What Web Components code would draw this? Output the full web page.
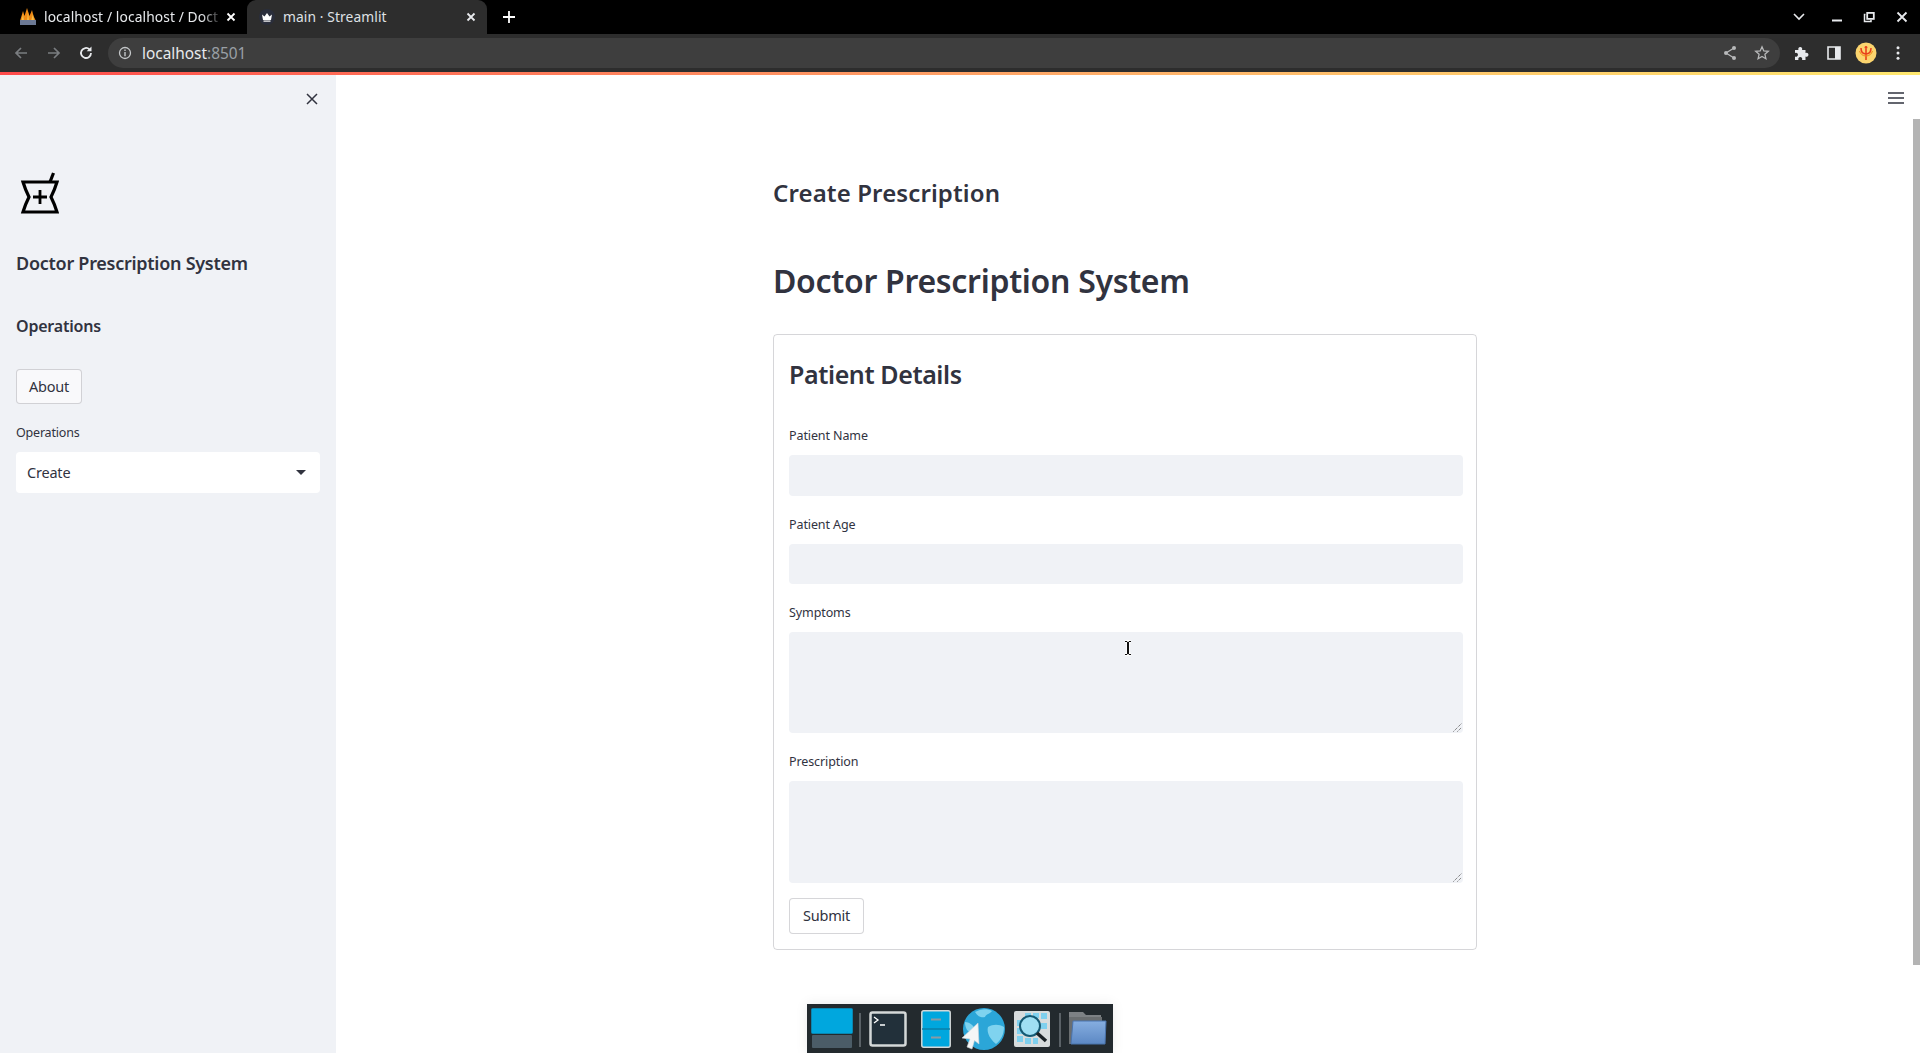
<!DOCTYPE html>
<html lang="en"><head><meta charset="utf-8"><title>main · Streamlit</title>
<style>
html,body{margin:0;height:100%;overflow:hidden;background:#fff}
body{font-family:"Noto Sans","Liberation Sans",sans-serif}
app-frame{height:1053px}
</style></head><body>
<app-frame>
  <browser-chrome></browser-chrome>
  <st-sidebar slot="side">
    <st-button slot="about" label="About" tone="soft"></st-button>
  </st-sidebar>
  <st-main slot="main">
    <st-card>
      <st-field label="Patient Name" h="41"></st-field>
      <st-field label="Patient Age" h="40"></st-field>
      <st-field label="Symptoms" h="101" area></st-field>
      <st-field label="Prescription" h="102" area></st-field>
      <st-button label="Submit" class="sub"></st-button>
    </st-card>
  </st-main>
  <os-dock slot="over"></os-dock>
</app-frame>
<script>
function def(name,html,init){customElements.define(name,class extends HTMLElement{constructor(){super();this.attachShadow({mode:'open'}).innerHTML=typeof html==='function'?html(this):html}connectedCallback(){if(init)init(this)}})}
const TXT='#31333f';
const ST='font-family:"Noto Sans",sans-serif;';

def('app-frame',`<style>
:host{display:flex;flex-direction:column;position:relative;overflow:hidden}
.body{flex:1;display:flex;min-height:0}
::slotted(os-dock){position:absolute;left:807px;bottom:0}
.ibeam{position:absolute;left:1123px;top:640px}
</style>
<slot></slot>
<div class="body"><slot name="side"></slot><slot name="main"></slot></div>
<slot name="over"></slot>
<svg class="ibeam" width="10" height="16" viewBox="0 0 10 16"><path d="M2 1.5h6M2 14.5h6M5 1.5v13" stroke="#fff" stroke-width="3.4" fill="none"/><path d="M2 1.5h2.2M5.8 1.5H8M2 14.5h2.2M5.8 14.5H8M4.5 2v12M5.5 2v12" stroke="#111" stroke-width="1" fill="none"/></svg>`);

def('browser-chrome',`<style>
:host{display:block;flex:none;color:#e8eaed;font:13px "Noto Sans",sans-serif}
.tabs{height:34px;background:#000;display:flex;position:relative}
.tab{box-sizing:border-box;height:34px;display:flex;align-items:center;white-space:nowrap}
.tab.off{width:247px;padding:0 8px 0 18px}
.tab.on{width:240px;background:#2d2d2d;border-radius:9px 9px 0 0;padding:0 8px 0 12px}
.tt{flex:1;min-width:0;margin-left:6px;padding-bottom:2px;font-size:13.8px;letter-spacing:.1px;color:#e8eaed;white-space:nowrap}
.fade{-webkit-mask-image:linear-gradient(90deg,#000 88%,transparent);mask-image:linear-gradient(90deg,#000 88%,transparent)}
.x{width:16px;height:16px;flex:none}
.plus{margin:10px 0 0 15px;width:14px;height:14px}
.winbtns{margin-left:auto;display:flex;align-items:center}
.bar{height:38px;background:#2d2d2d;display:flex;align-items:center}
.nav{width:16px;height:16px;display:block;flex:none}
.omni{margin-left:14px;width:1672px;height:30px;border-radius:15px;background:#3e3e3e;display:flex;align-items:center;box-sizing:border-box;padding:0 10px;font-size:15.4px}
.host{margin-left:10px;color:#e8eaed}.port{color:#9aa0a6}
.rb{height:3px;background:linear-gradient(90deg,#ff4b4b 0%,#ff7f5c 30%,#ffb36b 60%,#ffe86f 100%)}
.sp{margin-left:auto;display:flex;align-items:center;gap:16px}
.tools{display:flex;align-items:center;margin-left:14px}
svg{display:block}
</style>
<div class="tabs">
  <div class="tab off">
    <svg width="20" height="18" viewBox="0 0 20 18" style="flex:none"><path d="M2 13 5 3l1.500 5L9 0l2.500 8L14 2l1.500 6L18 13z" fill="#f08a14"/><path d="M5 6l1 7H3.500zM10 4l1 9H9zM15 6l1 7h-3z" fill="#f7c04a"/><rect x="2" y="12" width="16" height="5" fill="#6b7894"/></svg>
    <span class="tt fade">localhost / localhost / Doct</span>
    <svg class="x" viewBox="0 0 16 16"><path d="M4.500 4.500l7 7M11.500 4.500l-7 7" stroke="#fff" stroke-width="1.800"/></svg>
  </div>
  <div class="tab on">
    <svg width="16" height="16" viewBox="0 0 16 16" style="flex:none"><circle cx="8" cy="8" r="8" fill="#2a2e3b"/><path d="M3 5.500 5.500 7.500 8 4l2.500 3.500 2.500-2-1 5.500H4z" fill="#fff"/><rect x="4.500" y="11.500" width="7" height="1.200" fill="#fff"/></svg>
    <span class="tt" style="color:#dfe1e5;margin-left:8px">main · Streamlit</span>
    <svg class="x" viewBox="0 0 16 16"><path d="M4.500 4.500l7 7M11.500 4.500l-7 7" stroke="#e8eaed" stroke-width="1.800"/></svg>
  </div>
  <svg class="plus" viewBox="0 0 14 14"><path d="M7 1v12M1 7h12" stroke="#fff" stroke-width="1.800"/></svg>
  <div class="winbtns">
    <svg width="32" height="34" viewBox="0 0 32 34"><path d="M4 14l5 5 5-5" stroke="#e8eaed" stroke-width="1.600" fill="none"/></svg>
    <svg width="32" height="34" viewBox="0 0 32 34"><rect x="10" y="19.500" width="10" height="2" fill="#e8eaed"/></svg>
    <svg width="32" height="34" viewBox="0 0 32 34"><path d="M11.500 14.500h-1v7h6.500v-1.500" stroke="#e8eaed" stroke-width="1.500" fill="none"/><rect x="13.200" y="12.900" width="6.600" height="6" stroke="#e8eaed" stroke-width="1.800" fill="none"/></svg>
    <svg width="34" height="34" viewBox="0 0 34 34"><path d="M11.500 12.500l9 9M20.500 12.500l-9 9" stroke="#e8eaed" stroke-width="1.800"/></svg>
  </div>
</div>
<div class="bar">
  <svg class="nav" style="margin-left:13px" viewBox="0 0 16 16"><path d="M14 8H3M8 3 3 8l5 5" stroke="#7a7d80" stroke-width="1.700" fill="none"/></svg>
  <svg class="nav" style="margin-left:17px" viewBox="0 0 16 16"><path d="M2 8h11M8 3l5 5-5 5" stroke="#7a7d80" stroke-width="1.700" fill="none"/></svg>
  <svg class="nav" style="margin-left:16px" viewBox="0 0 16 16"><path d="M13 8a5 5 0 1 1-1.500-3.600" stroke="#e8eaed" stroke-width="1.800" fill="none"/><path d="M13.500 1.500v4.800H8.700z" fill="#e8eaed"/></svg>
  <div class="omni">
    <svg width="14" height="14" viewBox="0 0 14 14"><circle cx="7" cy="7" r="5.500" stroke="#c4c7c9" stroke-width="1.300" fill="none"/><path d="M7 6v4.200M7 3.600v1.300" stroke="#c4c7c9" stroke-width="1.400"/></svg>
    <span class="host">localhost<span class="port">:8501</span></span>
    <span class="sp">
      <svg width="16" height="16" viewBox="0 0 16 16"><path d="M12 3 4 8l8 5" stroke="#b8b9ba" stroke-width="1.300" fill="none"/><circle cx="12" cy="3" r="2" fill="#b8b9ba"/><circle cx="4" cy="8" r="2" fill="#b8b9ba"/><circle cx="12" cy="13" r="2" fill="#b8b9ba"/></svg>
      <svg width="16" height="16" viewBox="0 0 16 16"><path d="M8 1.800l1.800 4.100 4.500.4-3.400 3 1 4.400L8 11.400l-3.900 2.300 1-4.400-3.400-3 4.500-.4z" stroke="#b8b9ba" stroke-width="1.300" fill="none"/></svg>
    </span>
  </div>
  <div class="tools">
    <svg width="16" height="16" viewBox="0 0 16 16"><path d="M1 5h3.500a2 2 0 1 1 3.500 0H11.500v3a2 2 0 1 1 0 3.500V15H8a2 2 0 1 0-3.500 0H1v-3.500a2 2 0 1 0 0-3.500z" fill="#e8eaed"/></svg>
    <svg width="16" height="16" viewBox="0 0 16 16" style="margin-left:16px"><path d="M2 2h12v12H2z" fill="none" stroke="#e8eaed" stroke-width="1.600"/><rect x="9" y="2" width="5" height="12" fill="#e8eaed"/></svg>
    <svg width="22" height="22" viewBox="0 0 22 22" style="margin-left:13px"><circle cx="11" cy="11" r="10.500" fill="#fbd46e"/><path d="M11 7v11M6 6c0 5 2 6 5 6s5-1 5-6" stroke="#e8401c" stroke-width="1.600" fill="none"/><path d="M4.500 9c1 3 3 5 6.500 5s5.500-2 6.500-5" stroke="#f08a14" stroke-width="1" fill="none"/><circle cx="11" cy="5.500" r="1.400" fill="#e8401c"/></svg>
    <svg width="16" height="16" viewBox="0 0 16 16" style="margin-left:13px"><circle cx="8" cy="2.800" r="1.500" fill="#e8eaed"/><circle cx="8" cy="8" r="1.500" fill="#e8eaed"/><circle cx="8" cy="13.200" r="1.500" fill="#e8eaed"/></svg>
  </div>
</div>
<div class="rb"></div>`);

def('st-sidebar',`<style>
:host{display:block;flex:none;width:336px;background:#f0f2f6;color:${TXT};box-sizing:border-box;padding:0 16px;${ST}}
.top{height:47px;display:flex;justify-content:flex-end;align-items:center;margin-right:1px}
.ic{display:block;margin:50px 0 0 4px}
h2{margin:31px 0 0;font-size:18px;line-height:36px;font-weight:600;letter-spacing:-.27px}
h3{margin:27px 0 0;font-size:16px;line-height:36px;font-weight:600;letter-spacing:-.2px}
.btn{margin-top:25px;height:35px}
label{display:block;margin-top:18px;font-size:12.500px;line-height:22px;letter-spacing:-.2px}
.sel{margin-top:8px;height:41px;background:#fff;border-radius:4px;display:flex;align-items:center;justify-content:space-between;padding:0 14px 2px 11px;box-sizing:border-box;font-size:14.500px;letter-spacing:-.2px}
.car{width:0;height:0;border:5.500px solid transparent;border-top:5.500px solid ${TXT};border-bottom:0;display:block;margin-top:2px}
</style>
<div class="top"><svg width="14" height="14" viewBox="0 0 14 14"><path d="M2 2l10 10M12 2 2 12" stroke="#31333f" stroke-width="1.500"/></svg></div>
<svg class="ic" width="40" height="42" viewBox="0 0 40 42"><path d="M3 10H37C35.500 15 33.500 20 31 25C33.500 30 35.500 35 37 40H3C4.500 35 6.500 30 9 25C6.500 20 4.500 15 3 10Z" fill="none" stroke="#000" stroke-width="3.200"/><path d="M30 10l3.500-9" stroke="#000" stroke-width="3.200"/><path d="M20 18v14M13 25h14" stroke="#000" stroke-width="2.800"/></svg>
<h2>Doctor Prescription System</h2>
<h3>Operations</h3>
<div class="btn"><slot name="about"></slot></div>
<label>Operations</label>
<div class="sel"><span>Create</span><i class="car"></i></div>`);

def('st-main',`<style>
:host{display:flex;flex:1;min-width:0;position:relative;background:#fff;color:${TXT};${ST}}
.col{width:704px;margin-left:437px}
h3{margin:100px 0 0;font-size:24px;line-height:36px;font-weight:600;letter-spacing:.12px}
h1{margin:51px 0 0;font-size:32px;line-height:38px;font-weight:600;letter-spacing:-.3px}
.hb{position:absolute;right:16px;top:17px}
.sb{position:absolute;right:0;top:44px;width:7px;height:846px;background:#b4b4b4}
.w{margin-top:34px}
</style>
<svg class="hb" width="16" height="12" viewBox="0 0 16 12"><path d="M0 1h16M0 6h16M0 11h16" stroke="#31333f" stroke-width="1.500"/></svg>
<div class="sb"></div>
<div class="col"><h3>Create Prescription</h3><h1>Doctor Prescription System</h1><div class="w"><slot></slot></div></div>`);

def('st-card',`<style>
:host{display:block;box-sizing:border-box;height:616px;border:1px solid rgba(49,51,63,.2);border-radius:4px;padding:0 13px 0 15px}
h2{margin:14px 0 0;font-size:25px;line-height:51px;font-weight:600;letter-spacing:-.4px;color:${TXT}}
.f{margin-top:25px;display:flex;flex-direction:column}
::slotted(st-button){margin-top:-2px;height:36px}
</style>
<h2>Patient Details</h2><div class="f"><slot></slot></div>`);

def('st-field',h=>{const a=h.getAttribute('h');return `<style>
:host{display:block;height:${a==='40'?88:a==='41'?89:149}px}
label{display:block;font-size:12.500px;line-height:22px;letter-spacing:-.1px;color:${TXT}}
.b{background:#f0f2f6;border-radius:4px;position:relative}
svg{position:absolute;right:1px;bottom:1px}
</style>
<label>${h.getAttribute('label')}</label>
<div class="b" style="margin-top:8px;height:${a}px">${h.hasAttribute('area')?'<svg width="9" height="9" viewBox="0 0 9 9"><path d="M.500 8.500 8.500 .500M4.500 8.500 8.500 4.500" stroke="#555" stroke-width="1" stroke-dasharray="1 1"/></svg>':''}</div>`});

def('st-button',h=>{const t=h.getAttribute('tone');return `<style>
:host{display:block;${ST}}
button{all:unset;box-sizing:border-box;display:flex;align-items:center;justify-content:center;padding-bottom:2px;height:${t?35:36}px;width:${t?66:75}px;background:${t?'#f9f9fb':'#fff'};border:1px solid rgba(49,51,63,.2);border-radius:4px;font-size:14.500px;letter-spacing:-.2px;color:${TXT}}
</style><button>${h.getAttribute('label')}</button>`});

def('os-dock',`<style>
:host{display:flex;width:306px;height:49px;background:#232a2e;box-sizing:border-box;padding:0 0 0 4px;align-items:flex-start;box-shadow:0 0 12px rgba(0,0,0,.08)}
svg{display:block;flex:none;overflow:visible}
.s{width:2px;height:34px;background:#5a6166;margin-top:9px;flex:none}
</style>
<svg style="margin-top:4px" width="42" height="40" viewBox="0 0 42 40"><rect x=".5" y=".5" width="41" height="25" rx="1" fill="#00a7de" stroke="#0a86b0"/><rect x="1" y="27" width="40" height="13" rx="1" fill="#4b5c67"/></svg>
<div class="s" style="margin-left:6px"></div>
<svg style="margin:7px 0 0 8px" width="38" height="36" viewBox="0 0 38 36"><rect x="1.500" y="1.500" width="35" height="33" rx="2" fill="#22303a" stroke="#d4d8d8" stroke-width="2.500"/><path d="M5 6l4 3-4 3M11 14h5" stroke="#fff" stroke-width="1.300" fill="none"/></svg>
<svg style="margin:6px 0 0 14px" width="30" height="38" viewBox="0 0 30 38"><rect x=".8" y=".8" width="28.400" height="36.400" rx="2" fill="#00a7de" stroke="#d4d8d8" stroke-width="1.500"/><path d="M1 19h28" stroke="#0a7fa8" stroke-width="1.500"/><path d="M10 9.500h10M10 27.500h10" stroke="#8a9aa3" stroke-width="2"/></svg>
<svg style="margin:4px 0 0 12px" width="42" height="42" viewBox="0 0 42 42"><circle cx="21" cy="21" r="21" fill="#2ba6d8"/><path d="M12 4c5-3 12-4 17-1-2 3-6 3-7 6-3 1-7 0-10-5zM25 19c5-3 11-3 16 0 0 7-3 13-8 17-4-3-10-10-8-17zM2 14c4 0 9 3 10 8-2 2-6 2-8 0-1-2-2-4-2-8z" fill="#7fd3ef"/><path d="M15 15 16 36 11.500 32.500 9 41 4 39 7 31-1 30Z" fill="#f4f6f6" stroke="#cfd4d6" stroke-width=".6"/></svg>
<svg style="margin:7px 0 0 9px" width="36" height="36" viewBox="0 0 36 36"><rect width="36" height="36" rx="2" fill="#d7dcdd"/><g fill="#7fd0ee"><rect x="3" y="9" width="6" height="6"/><rect x="3" y="17" width="6" height="6"/><rect x="3" y="25" width="6" height="6"/><rect x="11" y="27" width="6" height="6"/><rect x="19" y="27" width="5" height="6"/><rect x="27" y="2" width="6" height="6"/><rect x="27" y="12" width="6" height="6"/><rect x="11" y="2" width="6" height="5"/><rect x="19" y="2" width="6" height="5"/></g><circle cx="16" cy="15" r="10" fill="#9fdff3" stroke="#155a74" stroke-width="2"/><path d="M23 22l9 8" stroke="#1a2226" stroke-width="3.500"/></svg>
<div class="s" style="margin-left:9px"></div>
<svg style="margin:8px 0 0 8px" width="37" height="32" viewBox="0 0 37 32"><defs><linearGradient id="fd" x1="0" y1="0" x2="0" y2="1"><stop offset="0" stop-color="#86aee0"/><stop offset="1" stop-color="#5c88c4"/></linearGradient></defs><path d="M0 0h14l3 3h15v8H0z" fill="#7d8184"/><path d="M0 5h33v27H0z" fill="#6a6e70"/><path d="M4 9h33l-1 23H2z" fill="url(#fd)" stroke="#4b74ad"/></svg>`);
</script>
</body></html>
